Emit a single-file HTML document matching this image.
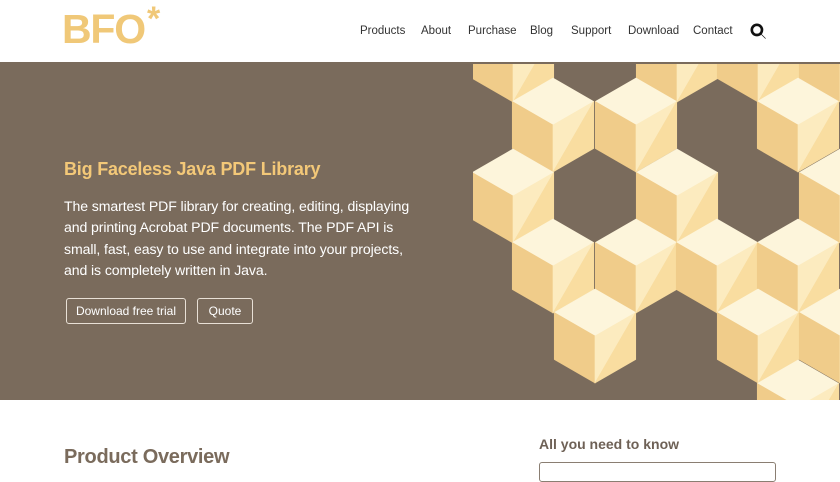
<!DOCTYPE html>
<html><head><meta charset="utf-8"><style>
*{margin:0;padding:0;box-sizing:border-box}
body{width:840px;height:472px;overflow:hidden;background:#fff;font-family:"Liberation Sans",sans-serif;position:relative}
.a{position:absolute;white-space:nowrap}
.nav{top:25px;font-size:11.5px;color:#333}
.hero{position:absolute;left:0;top:62px;width:840px;height:338px;background:#7a6b5c;overflow:hidden}
.p{left:64px;font-size:14.1px;color:#fff;letter-spacing:-0.1px}
.btn{position:absolute;top:298px;height:26px;border:1px solid #e8e0d6;border-radius:3px;color:#fff;font-size:12px;text-align:center;line-height:24px}
path{stroke-width:0.6;stroke-linejoin:round}
</style></head><body>
<div class="a" style="left:62px;top:6px;font-size:41px;font-weight:bold;color:#f0c878;letter-spacing:-1.2px">BFO<span style="font-size:34px;vertical-align:top;position:relative;top:-6px;left:2px">*</span></div>
<div class="a nav" style="left:360px">Products</div>
<div class="a nav" style="left:421px">About</div>
<div class="a nav" style="left:468px">Purchase</div>
<div class="a nav" style="left:530px">Blog</div>
<div class="a nav" style="left:571px">Support</div>
<div class="a nav" style="left:628px">Download</div>
<div class="a nav" style="left:693px">Contact</div>
<svg class="a" style="left:750px;top:23px" width="17" height="17" viewBox="0 0 16 16"><circle cx="6.5" cy="6.5" r="4.8" fill="none" stroke="#111" stroke-width="2.5"/><path d="M10 10L14.5 14.5" stroke="#111" stroke-width="3" stroke-linecap="round"/></svg>
<div class="hero">
<svg style="position:absolute;left:0;top:0" width="840" height="338" viewBox="0 62 840 338">
<defs><g id="c">
<path d="M0,0 L-40.75,-23.5 L0,-47 L40.75,-23.5 Z" fill="#fdf5db" stroke="#fdf5db"/>
<path d="M0,0 L-40.75,-23.5 L-40.75,23.5 L0,47 Z" fill="#f0cc8a" stroke="#f0cc8a"/>
<path d="M0,0 L40.75,-23.5 L0,47 Z" fill="#fcebbf" stroke="#fcebbf"/>
<path d="M40.75,-23.5 L40.75,23.5 L0,47 Z" fill="#f9dda0" stroke="#f9dda0"/>
</g>
<clipPath id="k"><rect x="473" y="62" width="367" height="338"/></clipPath></defs>
<g clip-path="url(#k)" transform="translate(0,2)">
<use href="#c" x="513" y="53"/><use href="#c" x="677" y="53"/><use href="#c" x="758" y="53"/><use href="#c" x="840" y="53"/>
<use href="#c" x="553" y="123"/><use href="#c" x="636" y="123"/><use href="#c" x="798" y="123"/>
<use href="#c" x="513" y="194"/><use href="#c" x="677" y="194"/><use href="#c" x="840" y="194"/>
<use href="#c" x="553" y="264"/><use href="#c" x="636" y="264"/><use href="#c" x="717" y="264"/><use href="#c" x="798" y="264"/>
<use href="#c" x="595" y="334"/><use href="#c" x="758" y="334"/><use href="#c" x="840" y="334"/>
<use href="#c" x="798" y="405"/>
</g></svg>
</div>
<div class="a" style="left:64px;top:159px;font-size:18px;font-weight:bold;color:#f3c878;letter-spacing:-0.2px">Big Faceless Java PDF Library</div>
<div class="a p" style="top:198px">The smartest PDF library for creating, editing, displaying</div>
<div class="a p" style="top:219px">and printing Acrobat PDF documents. The PDF API is</div>
<div class="a p" style="top:241px">small, fast, easy to use and integrate into your projects,</div>
<div class="a p" style="top:262px">and is completely written in Java.</div>
<div class="btn" style="left:66px;width:120px">Download free trial</div>
<div class="btn" style="left:197px;width:56px">Quote</div>
<div class="a" style="left:64px;top:446px;font-size:20px;font-weight:bold;color:#7a6b5c;letter-spacing:-0.3px">Product Overview</div>
<div class="a" style="left:539px;top:436px;font-size:14px;font-weight:bold;color:#6e6156">All you need to know</div>
<div class="a" style="left:539px;top:462px;width:237px;height:20px;border:1px solid #8a7e72;border-radius:3px"></div>
</body></html>
